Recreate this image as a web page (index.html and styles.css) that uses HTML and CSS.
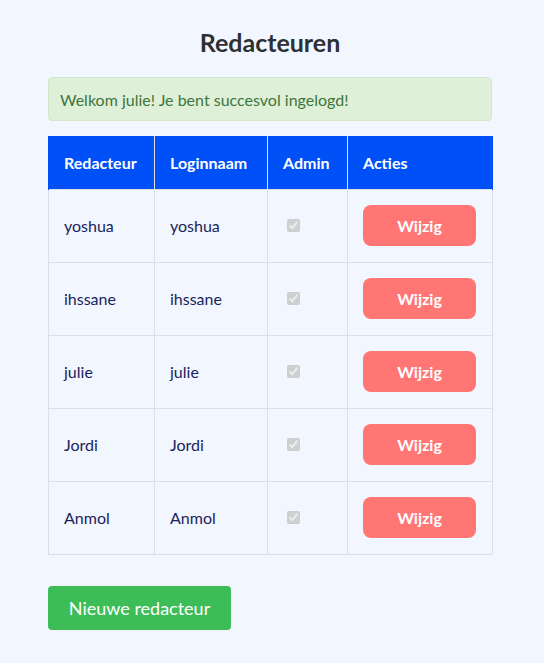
FILE: index.html
```html
<!DOCTYPE html>
<html lang="nl">
<head>
<meta charset="utf-8">
<title>Redacteuren</title>
<link rel="stylesheet" href="styles.css">
</head>
<body>
<main class="page">
  <h1 class="title">Redacteuren</h1>
  <div class="alert">Welkom julie! Je bent succesvol ingelogd!</div>
  <table class="editors">
    <thead>
      <tr>
        <th class="c1">Redacteur</th>
        <th class="c2">Loginnaam</th>
        <th class="c3">Admin</th>
        <th class="c4">Acties</th>
      </tr>
    </thead>
    <tbody>
      <tr><td>yoshua</td><td>yoshua</td><td><input type="checkbox" checked disabled></td><td><button class="edit">Wijzig</button></td></tr>
      <tr><td>ihssane</td><td>ihssane</td><td><input type="checkbox" checked disabled></td><td><button class="edit">Wijzig</button></td></tr>
      <tr><td>julie</td><td>julie</td><td><input type="checkbox" checked disabled></td><td><button class="edit">Wijzig</button></td></tr>
      <tr><td>Jordi</td><td>Jordi</td><td><input type="checkbox" checked disabled></td><td><button class="edit">Wijzig</button></td></tr>
      <tr><td>Anmol</td><td>Anmol</td><td><input type="checkbox" checked disabled></td><td><button class="edit">Wijzig</button></td></tr>
    </tbody>
  </table>
  <button class="new">Nieuwe redacteur</button>
</main>
</body>
</html>
```
FILE: styles.css
```css
html, body {
  margin: 0;
  padding: 0;
  background: #f2f6fe;
}
body {
  font-family: Lato, "Noto Sans", sans-serif;
  color: #1b1f5c;
}
.page {
  width: 444px;
  margin-left: 48px;
  padding-top: 27px;
}
.title {
  margin: 0 0 20px;
  text-align: center;
  font-size: 25px;
  line-height: 30px;
  font-weight: 700;
  color: #2d3033;
}
.alert {
  box-sizing: border-box;
  height: 44px;
  display: flex;
  align-items: center;
  padding: 0 11px;
  background: #dff0d8;
  border: 1px solid #d2e8c9;
  border-radius: 4px;
  color: #3c763d;
  font-size: 16px;
  margin-bottom: 15px;
}
.editors {
  width: 444px;
  border-collapse: collapse;
  table-layout: fixed;
  font-size: 16px;
}
.c1 { width: 106px; }
.c2 { width: 113px; }
.c3 { width: 80px; }
.c4 { width: 145px; }
.editors th {
  background: #0050f8;
  color: #fff;
  font-weight: 700;
  text-align: left;
  padding: 0 15px;
  height: 53px;
  box-sizing: border-box;
  border-left: 1px solid #dfe3ea;
  border-right: 1px solid #dfe3ea;
}
.editors th:first-child { border-left-color: #0050f8; }
.editors th:last-child { border-right-color: #0050f8; }
.editors td {
  padding: 0 15px;
  height: 73px;
  box-sizing: border-box;
  border: 1px solid #dcdfe4;
  vertical-align: middle;
}
.editors input[type="checkbox"] {
  margin: 0 0 4px 4px;
  width: 13px;
  height: 13px;
  vertical-align: middle;
}
.edit {
  width: 113px;
  height: 41px;
  border: 0;
  border-radius: 8px;
  background: #ff7675;
  color: #fff;
  font-family: inherit;
  font-size: 16px;
  font-weight: 700;
  cursor: pointer;
  display: block;
}
.new {
  margin-top: 31px;
  width: 183px;
  height: 44px;
  border: 0;
  border-radius: 4px;
  background: #3dbd58;
  color: #fff;
  font-family: inherit;
  font-size: 18px;
  cursor: pointer;
}
```
